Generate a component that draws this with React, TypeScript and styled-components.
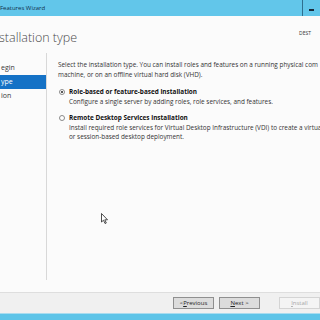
import React from 'react'
import styled, { createGlobalStyle } from 'styled-components'

const Global = createGlobalStyle`
  html, body {
    margin: 0;
    padding: 0;
    width: 320px;
    height: 320px;
    overflow: hidden;
    background: #fbfbfb;
  }
  * { box-sizing: border-box; }
`

const Window = styled.div`
  width: 320px;
  height: 320px;
  display: flex;
  flex-direction: column;
  font-family: 'Open Sans', 'Liberation Sans', sans-serif;
  color: #1e1e1e;
  background: #fbfbfb;
  position: relative;
  overflow: hidden;
`

const TitleBar = styled.div`
  height: 16px;
  flex: none;
  display: flex;
  align-items: center;
  background: #62c6ea;
`

const TitleText = styled.div`
  flex: 1;
  font-size: 6px;
  color: #10304a;
`

const MinButton = styled.div`
  width: 18px;
  height: 16px;
  border-left: 1px solid #2f6f8f;
  display: flex;
  align-items: center;
  justify-content: center;
  &::after {
    content: '';
    width: 5px;
    height: 2px;
    background: #1a2a3a;
    margin-top: 4px;
  }
`

const Header = styled.div`
  height: 37px;
  flex: none;
  display: flex;
  align-items: flex-start;
  justify-content: space-between;
`

const Heading = styled.h1`
  margin: 14px 0 0 -1px;
  font-family: 'Open Sans', 'Liberation Sans', sans-serif;
  font-weight: 300;
  font-size: 12.5px;
  line-height: 16px;
  color: #4a4a4a;
`

const Dest = styled.div`
  margin-top: 14px;
  padding-right: 9px;
  font-size: 5px;
  line-height: 6px;
  color: #333;
`

const Body = styled.div`
  flex: 1;
  display: flex;
`

const Nav = styled.div`
  width: 47px;
  flex: none;
  border-right: 1px solid #d8d8d8;
  margin-bottom: 12px;
  padding-top: 8px;
  display: flex;
  flex-direction: column;
`

const NavItem = styled.div<{ $active?: boolean }>`
  height: 14px;
  line-height: 14px;
  font-size: 7px;
  padding-left: 1px;
  background: ${p => (p.$active ? '#1572c6' : 'transparent')};
  color: ${p => (p.$active ? '#ffffff' : '#3a3a3a')};
`

const Content = styled.div`
  flex: 1;
  padding: 7px 0 0 11px;
  font-size: 6.4px;
  line-height: 9.5px;
  white-space: nowrap;
  overflow: hidden;
`

const Para = styled.p`
  margin: 0 0 8px 0;
  color: #333;
`

const Option = styled.div`
  display: grid;
  grid-template-columns: 11px 1fr;
  margin-bottom: 7px;
`

const Radio = styled.span<{ $checked?: boolean }>`
  width: 6px;
  height: 6px;
  margin-top: 2px;
  margin-left: 1px;
  border-radius: 50%;
  border: 1px solid #8a8a8a;
  background: #fff;
  display: flex;
  align-items: center;
  justify-content: center;
  &::after {
    content: '';
    width: 2px;
    height: 2px;
    border-radius: 50%;
    background: ${p => (p.$checked ? '#222' : 'transparent')};
  }
`

const OptionTitle = styled.div`
  font-weight: 700;
  color: #111;
`

const OptionDesc = styled.div`
  color: #333;
`

const Footer = styled.div`
  height: 21px;
  flex: none;
  background: #f0f0f0;
  border-top: 1px solid #dedede;
  display: flex;
  align-items: center;
  padding-left: 173px;
  gap: 5px;
`

const Button = styled.div<{ $disabled?: boolean; $gap?: number }>`
  width: 43px;
  height: 12px;
  margin-left: ${p => p.$gap ?? 0}px;
  border: 1px solid ${p => (p.$disabled ? '#d4d4d4' : '#8f8f8f')};
  background: ${p => (p.$disabled ? '#f4f4f4' : '#dcdcdc')};
  color: ${p => (p.$disabled ? '#a8a8a8' : '#222')};
  font-size: 6px;
  display: flex;
  align-items: center;
  justify-content: center;
  u { text-decoration: underline; }
`

const BottomStrip = styled.div`
  height: 7px;
  flex: none;
  background: #5ec4e8;
  border-top: 1px solid #a9dcef;
`

const Cursor = styled.svg`
  position: absolute;
  left: 101px;
  top: 213px;
`

export default function App() {
  return (
    <>
      <Global />
      <Window>
        <TitleBar>
          <TitleText>Features Wizard</TitleText>
          <MinButton />
        </TitleBar>
        <Header>
          <Heading>stallation type</Heading>
          <Dest>DEST</Dest>
        </Header>
        <Body>
          <Nav>
            <NavItem>egin</NavItem>
            <NavItem $active>ype</NavItem>
            <NavItem>ion</NavItem>
          </Nav>
          <Content>
            <Para>
              Select the installation type. You can install roles and features on a running physical com
              <br />
              machine, or on an offline virtual hard disk (VHD).
            </Para>
            <Option>
              <Radio $checked />
              <div>
                <OptionTitle>Role-based or feature-based installation</OptionTitle>
                <OptionDesc>Configure a single server by adding roles, role services, and features.</OptionDesc>
              </div>
            </Option>
            <Option>
              <Radio />
              <div>
                <OptionTitle>Remote Desktop Services installation</OptionTitle>
                <OptionDesc>
                  Install required role services for Virtual Desktop Infrastructure (VDI) to create a virtua
                  <br />
                  or session-based desktop deployment.
                </OptionDesc>
              </div>
            </Option>
          </Content>
        </Body>
        <Footer>
          <Button>&lt; <u>P</u>revious</Button>
          <Button><u>N</u>ext &gt;</Button>
          <Button $disabled $gap={14}><u>I</u>nstall</Button>
        </Footer>
        <BottomStrip />
        <Cursor width="8" height="12" viewBox="0 0 8 12">
          <path d="M0.5 0.5 L0.5 9 L2.5 7.2 L4 10.5 L5.3 10 L3.8 6.8 L6.5 6.8 Z" fill="#fff" stroke="#222" strokeWidth="0.8" />
        </Cursor>
      </Window>
    </>
  )
}
